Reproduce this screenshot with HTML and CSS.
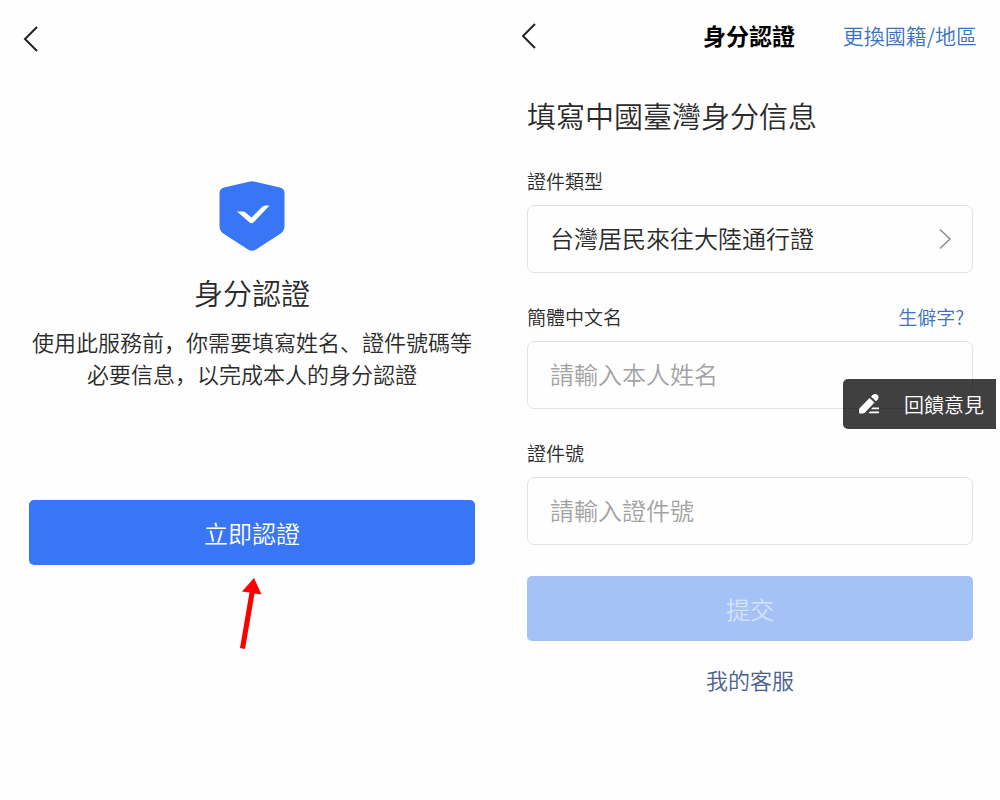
FILE: index.html
```
<!DOCTYPE html>
<html lang="zh">
  <head>
    <meta charset="utf-8" />
    <title>身分認證</title>
    <meta name="viewport" content="width=device-width, initial-scale=1.0" />
    <link rel="stylesheet" href="styles.css">
  </head>
  <body>
    <main class="screens">
      <section class="screen intro">
        <header class="topbar">
          <button class="back" type="button" aria-label="返回">
            <svg width="16" height="28" viewBox="0 0 16 28"><path d="M14 2 2 14l12 12" /></svg>
          </button>
        </header>

        <svg class="shield" width="66" height="70" viewBox="0 0 66 70">
          <path fill="#3976f6" d="M30 .8Q33-.3 36 .8L60 6.200Q65.500 7.500 65.500 12V45Q65.500 50 61 53L37 68.500Q33 71 29 68.500L5 53Q.5 50 .5 45V12Q.5 7.500 6 6.200Z" />
          <path fill="#fff" d="M18 30.500h6q1.500 0 2.500 1l6 5 10.500-10.500q1.500-1.500 3.500-1.500h4L35 41q-2.500 2.500-5 0Z" />
        </svg>
        <h1>身分認證</h1>
        <p>使用此服務前，你需要填寫姓名、證件號碼等<br>必要信息，以完成本人的身分認證</p>
        <button class="btn" type="button">立即認證</button>

        <svg class="pointer" width="24" height="72" viewBox="0 0 24 72">
          <path fill="#f00" d="M14 0 21.500 16.500 14.500 15.500 5 71 0 70 9.500 14.500 2 13.500Z" />
        </svg>
      </section>

      <section class="screen">
        <header class="topbar">
          <button class="back" type="button" aria-label="返回">
            <svg width="16" height="28" viewBox="0 0 16 28"><path d="M14 2 2 14l12 12" /></svg>
          </button>
          <strong>身分認證</strong>
          <a href="#">更換國籍/地區</a>
        </header>

        <form>
          <h2>填寫中國臺灣身分信息</h2>

          <div class="field">
            <div class="label-row">
              <label for="id_type">證件類型</label>
            </div>
            <div class="box">
              <select id="id_type">
                <option>台灣居民來往大陸通行證</option>
              </select>
              <svg class="chevron" width="12" height="22" viewBox="0 0 12 22"><path d="M1 1.500 11 11 1 20.500" /></svg>
            </div>
          </div>

          <div class="field">
            <div class="label-row">
              <label for="name">簡體中文名</label>
              <a href="#">生僻字?</a>
            </div>
            <div class="box">
              <input type="text" id="name" placeholder="請輸入本人姓名" />
            </div>
          </div>

          <div class="field">
            <div class="label-row">
              <label for="id_number">證件號</label>
            </div>
            <div class="box">
              <input type="text" id="id_number" placeholder="請輸入證件號" />
            </div>
          </div>

          <button class="btn" type="submit" disabled>提交</button>
        </form>

        <a class="service" href="#">我的客服</a>

        <button class="feedback" type="button">
          <svg width="22" height="22" viewBox="0 0 22 22">
            <path d="M11.500 5 16.500 9.500 7 19.500Q6 20.500 5 20.500H2q-1 0-1-1V17q0-1 .8-2Z" />
            <path d="M13 3.500Q14.500 1 17 1q1.500 0 2.700 1.200Q20.700 3.200 20.500 5q-.2 1.500-2.500 3.300Z" />
            <path d="M14.500 14.500H21v1.800h-8ZM12 18.500h9v1.800H10.500Z" />
          </svg>
          回饋意見
        </button>
      </section>
    </main>
  </body>
</html>
```
FILE: styles.css
```
* {
  box-sizing: border-box;
}

body {
  margin: 0;
  font-family: "Noto Sans CJK SC", sans-serif;
  font-size: 24px;
  color: #2b2b2b;
  background: #fefefe;
}

h1, h2 {
  margin: 0;
  font-size: 29px;
  font-weight: 350;
  line-height: 44px;
}

a {
  color: #3b73c4;
  text-decoration: none;
}

button, input, select {
  border: none;
  padding: 0;
  margin: 0;
  font: inherit;
  color: inherit;
  background: none;
}

svg {
  display: block;
}

.screens {
  display: grid;
  grid-template-columns: 1fr 1fr;
  padding-right: 4px;
  min-height: 100vh;
  font-weight: 350;
}

.screen {
  position: relative;
  display: flex;
  flex-direction: column;
  padding: 0 23px 0 29px;
}

/* top bar */

.topbar {
  display: grid;
  grid-template-columns: 1fr auto 1fr;
  align-items: center;
  height: 72px;
  margin: 0 -4px 0 -6px;
}

.topbar strong {
  padding-bottom: 3px;
  font-size: 23px;
  font-weight: bold;
  color: #000;
}

.topbar a {
  padding-bottom: 3px;
  font-size: 21px;
  text-align: right;
}

.back {
  justify-self: start;
}

.back path, .chevron path {
  fill: none;
  stroke: #222;
  stroke-width: 2;
}

/* intro screen */

.intro {
  align-items: center;
}

.intro .topbar {
  align-self: stretch;
  height: 78px;
}

.shield {
  margin-top: 103px;
}

.intro h1 {
  margin-top: 19px;
}

.intro p {
  margin: 11px 0 111px;
  font-size: 22px;
  line-height: 32px;
  text-align: center;
  white-space: nowrap;
}

.pointer {
  margin-top: 13px;
}

.btn {
  width: 100%;
  height: 65px;
  border-radius: 5px;
  color: #fff;
  background: #3976f6;
}

.btn[disabled] {
  color: #d3e2fb;
  background: #a5c2f7;
}

/* form screen */

form {
  display: flex;
  flex-direction: column;
  padding-top: 21px;
}

h2 {
  margin-bottom: 30px;
}

.field {
  margin-bottom: 30px;
}

.label-row {
  display: flex;
  justify-content: space-between;
  padding-right: 9px;
  margin-bottom: 10px;
  font-size: 19px;
  line-height: 28px;
}

.box {
  display: flex;
  align-items: center;
  height: 68px;
  padding: 0 21px 0 22px;
  border: 1px solid #e2e2e2;
  border-radius: 7px;
}

.box input, .box select {
  flex-grow: 1;
  min-width: 0;
  height: 100%;
  padding-bottom: 4px;
  appearance: none;
  outline: none;
}

.box input::placeholder {
  color: #a3a3a3;
  opacity: 1;
}

.chevron path {
  stroke: #8a8a8a;
  stroke-width: 1.5;
}

form .btn {
  margin-top: 1px;
}

.service {
  align-self: center;
  margin-top: 22px;
  font-size: 22px;
  line-height: 32px;
  color: #4a618f;
}

.feedback {
  position: absolute;
  top: 379px;
  right: 0;
  display: flex;
  align-items: center;
  gap: 24px;
  height: 50px;
  padding: 0 12px 0 15px;
  border-radius: 5px 0 0 5px;
  font-size: 20px;
  color: #fff;
  background: rgba(0, 0, 0, 0.75);
}

.feedback path {
  fill: #fff;
}
```
